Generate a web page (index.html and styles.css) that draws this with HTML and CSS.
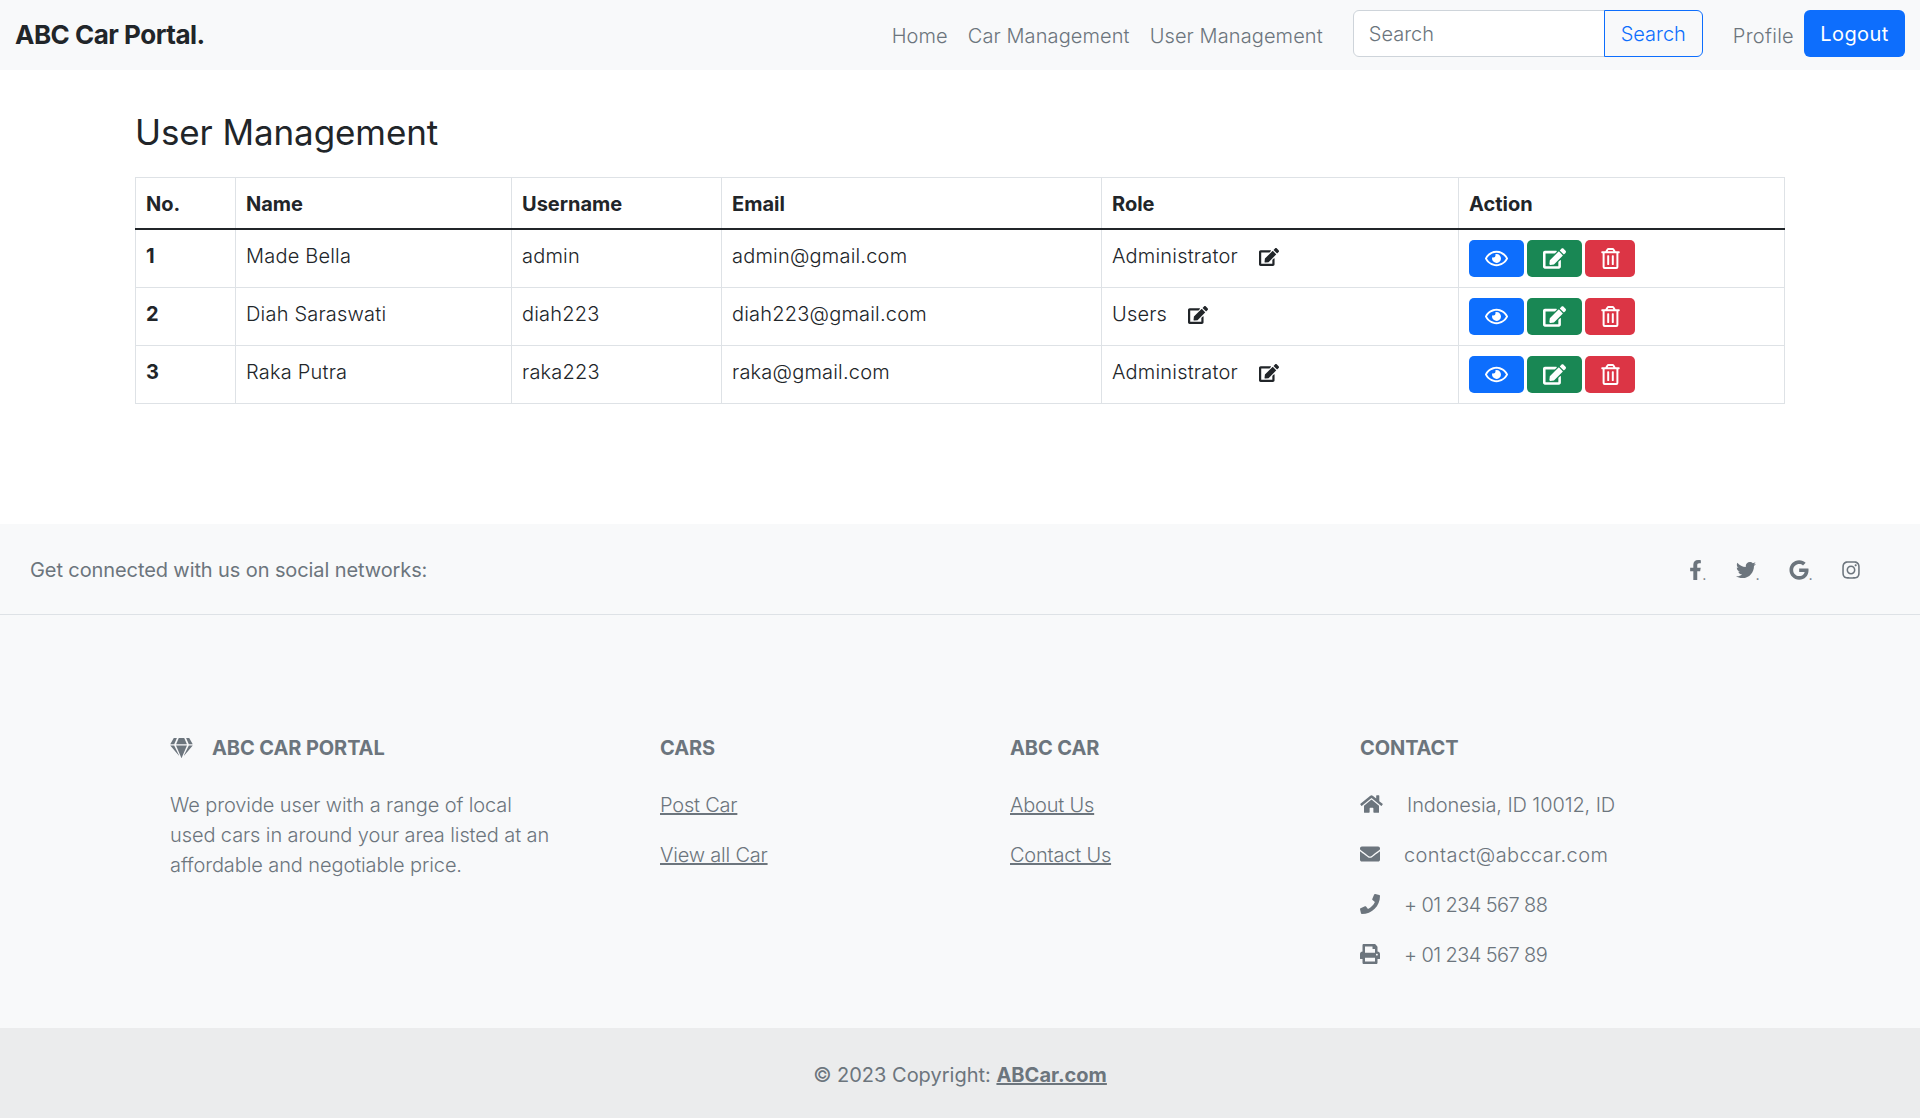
FILE: index.html
```html
<!DOCTYPE html>
<html lang="en">
<head>
<meta charset="UTF-8">
<meta name="viewport" content="width=device-width, initial-scale=1.0">
<title>User Management</title>
<link rel="stylesheet" href="styles.css">
</head>
<body>
<svg class="icon-defs" aria-hidden="true">
  <symbol id="i-eye" viewBox="0 0 576 512"><path d="M288 144a110.94 110.94 0 0 0-31.24 5 55.4 55.4 0 0 1 7.24 27 56 56 0 0 1-56 56 55.4 55.4 0 0 1-27-7.24A111.71 111.71 0 1 0 288 144zm284.52 97.4C518.29 135.59 410.93 64 288 64S57.68 135.64 3.48 241.41a32.35 32.35 0 0 0 0 29.19C57.71 376.41 165.07 448 288 448s230.32-71.64 284.52-177.41a32.35 32.35 0 0 0 0-29.19zM288 400c-98.65 0-189.09-55-237.93-144C98.91 167 189.34 112 288 112s189.09 55 237.93 144C477.1 345 386.66 400 288 400z"/></symbol>
  <symbol id="i-edit" viewBox="0 0 576 512"><path d="M402.6 83.2l90.2 90.2c3.8 3.8 3.8 10 0 13.8L274.4 405.6l-92.8 10.3c-12.4 1.4-22.9-9.1-21.5-21.5l10.3-92.8L388.8 83.2c3.8-3.8 10-3.8 13.8 0zm162-22.9l-48.8-48.8c-15.2-15.2-39.9-15.2-55.2 0l-35.4 35.4c-3.8 3.8-3.8 10 0 13.8l90.2 90.2c3.8 3.8 10 3.8 13.8 0l35.4-35.4c15.2-15.3 15.2-40 0-55.2zM384 346.2V448H64V128h229.8c3.2 0 6.2-1.3 8.5-3.5l40-40c7.6-7.6 2.2-20.5-8.5-20.5H48C21.5 64 0 85.5 0 112v352c0 26.5 21.5 48 48 48h352c26.5 0 48-21.5 48-48V306.2c0-10.7-12.9-16-20.5-8.5l-40 40c-2.2 2.3-3.5 5.3-3.5 8.5z"/></symbol>
  <symbol id="i-trash" viewBox="0 0 448 512"><path d="M268 416h24a12 12 0 0 0 12-12V188a12 12 0 0 0-12-12h-24a12 12 0 0 0-12 12v216a12 12 0 0 0 12 12zM432 80h-82.41l-34-56.7A48 48 0 0 0 274.41 0H173.59a48 48 0 0 0-41.16 23.3L98.41 80H16A16 16 0 0 0 0 96v16a16 16 0 0 0 16 16h16v336a48 48 0 0 0 48 48h288a48 48 0 0 0 48-48V128h16a16 16 0 0 0 16-16V96a16 16 0 0 0-16-16zM171.84 50.91A6 6 0 0 1 177 48h94a6 6 0 0 1 5.15 2.91L293.61 80H154.39zM368 464H80V128h288zm-212-48h24a12 12 0 0 0 12-12V188a12 12 0 0 0-12-12h-24a12 12 0 0 0-12 12v216a12 12 0 0 0 12 12z"/></symbol>
</svg>

<nav class="navbar">
  <a class="brand" href="#">ABC Car Portal.</a>
  <div class="nav-right">
    <ul class="nav-links">
      <li><a href="#">Home</a></li>
      <li><a href="#">Car Management</a></li>
      <li><a href="#">User Management</a></li>
    </ul>
    <form class="search">
      <input type="text" placeholder="Search">
      <button type="button">Search</button>
    </form>
    <a class="nav-profile" href="#">Profile</a>
    <a class="btn-logout" href="#">Logout</a>
  </div>
</nav>

<main class="content">
  <h1>User Management</h1>
  <table class="users">
    <colgroup>
      <col class="c-no"><col class="c-name"><col class="c-user"><col class="c-email"><col class="c-role"><col class="c-action">
    </colgroup>
    <thead>
      <tr><th>No.</th><th>Name</th><th>Username</th><th>Email</th><th>Role</th><th>Action</th></tr>
    </thead>
    <tbody>
      <tr>
        <th>1</th><td>Made Bella</td><td>admin</td><td>admin@gmail.com</td>
        <td>Administrator <svg class="role-edit"><use href="#i-edit"/></svg></td>
        <td><div class="actions">
          <a class="act act-view" href="#"><svg><use href="#i-eye"/></svg></a>
          <a class="act act-edit" href="#"><svg><use href="#i-edit"/></svg></a>
          <a class="act act-del" href="#"><svg><use href="#i-trash"/></svg></a>
        </div></td>
      </tr>
      <tr>
        <th>2</th><td>Diah Saraswati</td><td>diah223</td><td>diah223@gmail.com</td>
        <td>Users <svg class="role-edit"><use href="#i-edit"/></svg></td>
        <td><div class="actions">
          <a class="act act-view" href="#"><svg><use href="#i-eye"/></svg></a>
          <a class="act act-edit" href="#"><svg><use href="#i-edit"/></svg></a>
          <a class="act act-del" href="#"><svg><use href="#i-trash"/></svg></a>
        </div></td>
      </tr>
      <tr>
        <th>3</th><td>Raka Putra</td><td>raka223</td><td>raka@gmail.com</td>
        <td>Administrator <svg class="role-edit"><use href="#i-edit"/></svg></td>
        <td><div class="actions">
          <a class="act act-view" href="#"><svg><use href="#i-eye"/></svg></a>
          <a class="act act-edit" href="#"><svg><use href="#i-edit"/></svg></a>
          <a class="act act-del" href="#"><svg><use href="#i-trash"/></svg></a>
        </div></td>
      </tr>
    </tbody>
  </table>
</main>

<footer class="footer">
  <section class="social">
    <span class="social-text">Get connected with us on social networks:</span>
    <div class="social-links">
      <a href="#"><svg viewBox="0 0 320 512"><path d="M279.14 288l14.22-92.66h-88.91v-60.13c0-25.35 12.42-50.06 52.24-50.06h40.42V6.26S260.43 0 225.36 0c-73.22 0-121.08 44.38-121.08 124.72v70.62H22.89V288h81.39v224h100.17V288z"/></svg><i>.</i></a>
      <a href="#"><svg viewBox="0 0 512 512"><path d="M459.37 151.716c.325 4.548.325 9.097.325 13.645 0 138.72-105.583 298.558-298.558 298.558-59.452 0-114.68-17.219-161.137-47.106 8.447.974 16.568 1.299 25.34 1.299 49.055 0 94.213-16.568 130.274-44.832-46.132-.975-84.792-31.188-98.112-72.772 6.498.974 12.995 1.624 19.818 1.624 9.421 0 18.843-1.3 27.614-3.573-48.081-9.747-84.143-51.98-84.143-102.985v-1.299c13.969 7.797 30.214 12.67 47.431 13.319-28.264-18.843-46.781-51.005-46.781-87.391 0-19.492 5.197-37.36 14.294-52.954 51.655 63.675 129.3 105.258 216.365 109.807-1.624-7.797-2.599-15.918-2.599-24.04 0-57.828 46.782-104.934 104.934-104.934 30.213 0 57.502 12.67 76.67 33.137 23.715-4.548 46.456-13.32 66.599-25.34-7.798 24.366-24.366 44.833-46.132 57.827 21.117-2.273 41.584-8.122 60.426-16.243-14.292 20.791-32.161 39.308-52.628 54.253z"/></svg><i>.</i></a>
      <a href="#"><svg viewBox="0 0 488 512"><path d="M488 261.8C488 403.3 391.1 504 248 504 110.8 504 0 393.2 0 256S110.8 8 248 8c66.8 0 123 24.5 166.3 64.9l-67.5 64.9C258.5 52.6 94.3 116.6 94.3 256c0 86.5 69.1 156.6 153.7 156.6 98.2 0 135-70.4 140.8-106.9H248v-85.3h236.1c2.3 12.7 3.9 24.9 3.9 41.4z"/></svg><i>.</i></a>
      <a href="#"><svg viewBox="0 0 448 512"><path d="M224.1 141c-63.6 0-114.9 51.3-114.9 114.9s51.3 114.9 114.9 114.9S339 319.5 339 255.9 287.7 141 224.1 141zm0 189.6c-41.1 0-74.7-33.5-74.7-74.7s33.5-74.7 74.7-74.7 74.7 33.5 74.7 74.7-33.6 74.7-74.7 74.7zm146.4-194.3c0 14.9-12 26.8-26.8 26.8-14.9 0-26.8-12-26.8-26.8s12-26.8 26.8-26.8 26.8 12 26.8 26.8zm76.1 27.2c-1.7-35.9-9.9-67.7-36.2-93.9-26.2-26.2-58-34.4-93.9-36.2-37-2.1-147.9-2.1-184.9 0-35.8 1.7-67.6 9.9-93.9 36.1s-34.4 58-36.2 93.9c-2.1 37-2.1 147.9 0 184.9 1.7 35.9 9.9 67.7 36.2 93.9s58 34.4 93.9 36.2c37 2.1 147.9 2.1 184.9 0 35.9-1.7 67.7-9.9 93.9-36.2 26.2-26.2 34.4-58 36.2-93.9 2.1-37 2.1-147.8 0-184.8zM398.8 388c-7.8 19.6-22.9 34.7-42.6 42.6-29.5 11.7-99.5 9-132.1 9s-102.7 2.6-132.1-9c-19.6-7.8-34.7-22.9-42.6-42.6-11.7-29.5-9-99.5-9-132.1s-2.6-102.7 9-132.1c7.8-19.6 22.9-34.7 42.6-42.6 29.5-11.7 99.5-9 132.1-9s102.7-2.6 132.1 9c19.6 7.8 34.7 22.9 42.6 42.6 11.7 29.5 9 99.5 9 132.1s2.7 102.7-9 132.1z"/></svg></a>
    </div>
  </section>

  <section class="footer-main">
    <div class="col col-about">
      <h6><svg class="gem" viewBox="0 0 576 512"><path d="M485.5 0L576 160H474.9L405.7 0h79.8zm-128 0l69.2 160H149.3L218.5 0h139zm-267 0h79.8l-69.2 160H0L90.5 0zM0 192h100.7l123 251.7c1.5 3.1-2.7 5.9-5 3.3L0 192zm148.2 0h279.6l-137 318.2c-1 2.4-4.5 2.4-5.5 0L148.2 192zm204.1 251.7l123-251.7H576L357.3 446.9c-2.3 2.7-6.5-.1-5-3.2z"/></svg>ABC CAR PORTAL</h6>
      <p>We provide user with a range of local used cars in around your area listed at an affordable and negotiable price.</p>
    </div>
    <div class="col col-cars">
      <h6>CARS</h6>
      <p><a href="#">Post Car</a></p>
      <p><a href="#">View all Car</a></p>
    </div>
    <div class="col col-abc">
      <h6>ABC CAR</h6>
      <p><a href="#">About Us</a></p>
      <p><a href="#">Contact Us</a></p>
    </div>
    <div class="col col-contact">
      <h6>CONTACT</h6>
      <p class="addr"><svg viewBox="0 0 576 512"><path d="M280.37 148.26L96 300.11V464a16 16 0 0 0 16 16l112.06-.29a16 16 0 0 0 15.92-16V368a16 16 0 0 1 16-16h64a16 16 0 0 1 16 16v95.64a16 16 0 0 0 16 16.05L464 480a16 16 0 0 0 16-16V300L295.67 148.26a12.19 12.19 0 0 0-15.3 0zM571.6 251.47L488 182.56V44.05a12 12 0 0 0-12-12h-56a12 12 0 0 0-12 12v72.61L318.47 43a48 48 0 0 0-61 0L4.34 251.47a12 12 0 0 0-1.6 16.9l25.5 31A12 12 0 0 0 45.15 301l235.22-193.74a12.19 12.19 0 0 1 15.3 0L530.9 301a12 12 0 0 0 16.9-1.6l25.5-31a12 12 0 0 0-1.7-16.93z"/></svg>Indonesia, ID 10012, ID</p>
      <p class="mail"><svg viewBox="0 0 512 512"><path d="M502.3 190.8c3.9-3.1 9.7-.2 9.7 4.7V400c0 26.5-21.5 48-48 48H48c-26.5 0-48-21.5-48-48V195.6c0-5 5.7-7.8 9.7-4.7 22.4 17.4 52.1 39.5 154.1 113.6 21.1 15.4 56.7 47.8 92.2 47.6 35.7.3 72-32.8 92.3-47.6 102-74.1 131.6-96.3 154-113.7zM256 320c23.2.4 56.6-29.2 73.4-41.4 132.7-96.3 142.8-104.7 173.4-128.7 5.8-4.5 9.2-11.5 9.2-18.9v-19c0-26.5-21.5-48-48-48H48C21.5 64 0 85.5 0 112v19c0 7.4 3.4 14.3 9.2 18.9 30.6 23.9 40.7 32.4 173.4 128.7 16.8 12.2 50.2 41.8 73.4 41.4z"/></svg>contact@abccar.com</p>
      <p class="tel"><svg viewBox="0 0 512 512"><path d="M493.4 24.6l-104-24c-11.3-2.6-22.9 3.3-27.5 13.9l-48 112c-4.2 9.8-1.4 21.3 6.9 28l60.6 49.6c-36 76.7-98.9 140.5-177.2 177.2l-49.6-60.6c-6.8-8.3-18.2-11.1-28-6.9l-112 48C3.9 366.5-2 378.1.6 389.4l24 104C27.1 504.2 36.7 512 48 512c256.1 0 464-207.5 464-464 0-11.2-7.7-20.9-18.6-23.4z"/></svg>+ 01 234 567 88</p>
      <p class="tel"><svg viewBox="0 0 512 512"><path d="M448 192V77.25c0-8.49-3.37-16.62-9.37-22.63L393.37 9.37c-6-6-14.14-9.37-22.63-9.37H96C78.33 0 64 14.33 64 32v160c-35.35 0-64 28.65-64 64v112c0 8.84 7.16 16 16 16h48v96c0 17.67 14.33 32 32 32h320c17.67 0 32-14.33 32-32v-96h48c8.84 0 16-7.16 16-16V256c0-35.35-28.65-64-64-64zm-64 256H128v-96h256v96zm0-224H128V64h192v48c0 8.84 7.16 16 16 16h48v96zm48 72c-13.25 0-24-10.75-24-24 0-13.26 10.75-24 24-24s24 10.74 24 24c0 13.25-10.75 24-24 24z"/></svg>+ 01 234 567 89</p>
    </div>
  </section>

  <div class="copyright">© 2023 Copyright: <a href="#">ABCar.com</a></div>
</footer>
</body>
</html>
```

FILE: styles.css
```css
* {
  box-sizing: border-box;
}
body {
  margin: 0;
  font-family: Inter, "Liberation Sans", sans-serif;
  font-size: 20px;
  line-height: 30px;
  color: #212529;
  background: #fff;
}
a {
  color: inherit;
}
.icon-defs {
  display: none;
}

/* navbar */
.navbar {
  display: flex;
  justify-content: space-between;
  align-items: center;
  height: 70px;
  padding: 0 15px;
  background-color: #f8f9fa;
}
.brand {
  font-size: 26px;
  font-weight: 700;
  letter-spacing: -0.5px;
  text-decoration: none;
  color: #212529;
}
.nav-right {
  display: flex;
  align-items: center;
  font-weight: 300;
}
.nav-links {
  display: flex;
  gap: 20px;
  list-style: none;
  margin: 2px 30px 0 0;
  padding: 0;
  letter-spacing: 0.1px;
}
.nav-links a,
.nav-profile {
  color: #6c757d;
  text-decoration: none;
}
.search {
  display: flex;
  margin: 0 30px 4px 0;
}
.search input {
  width: 252px;
  height: 47px;
  padding: 2px 15px 0;
  border: 1px solid #ced4da;
  border-radius: 6px 0 0 6px;
  font: inherit;
  background: #fff;
  outline: none;
}
.search input::placeholder {
  color: #6c757d;
}
.search button {
  width: 99px;
  height: 47px;
  margin-left: -1px;
  padding: 2px 0 0;
  border: 1px solid #0d6efd;
  border-radius: 0 6px 6px 0;
  font: inherit;
  color: #0d6efd;
  background: transparent;
}
.nav-profile {
  margin: 2px 10px 0 0;
  letter-spacing: 0.3px;
}
.btn-logout {
  display: flex;
  align-items: center;
  justify-content: center;
  width: 101px;
  height: 47px;
  margin-bottom: 4px;
  padding-top: 2px;
  border-radius: 6px;
  font-weight: 400;
  letter-spacing: 0.4px;
  color: #fff;
  background-color: #0d6efd;
  text-decoration: none;
}

/* user table */
.content {
  height: 454px;
  padding: 38px 135px 0;
}
.content h1 {
  margin: 0 0 21px;
  font-size: 35px;
  line-height: 48px;
  font-weight: 400;
  letter-spacing: -0.1px;
}
.users {
  width: 100%;
  table-layout: fixed;
  border-collapse: collapse;
}
.c-no { width: 100px; }
.c-name { width: 276px; }
.c-user { width: 210px; }
.c-email { width: 380px; }
.c-role { width: 357px; }
.users th,
.users td {
  padding: 11px 10px 10px;
  border: 1px solid #dee2e6;
  text-align: left;
  vertical-align: top;
}
.users td {
  font-weight: 300;
  letter-spacing: 0.2px;
}
.users thead th {
  height: 51px;
  padding: 11px 10px 9px;
  border-bottom: 2px solid #212529;
}
.users tbody tr {
  height: 58px;
}
.role-edit {
  width: 20px;
  height: 18px;
  margin-left: 15px;
  fill: #212529;
  vertical-align: -3px;
}
.actions {
  display: flex;
  gap: 3px;
  margin-top: -1px;
}
.act {
  display: flex;
  align-items: center;
  justify-content: center;
  width: 55px;
  height: 37px;
  border-radius: 5px;
  color: #fff;
}
.act svg {
  width: 23px;
  height: 21px;
  fill: #fff;
}
.act-view { background-color: #0d6efd; }
.act-edit { background-color: #198754; }
.act-del { width: 50px; background-color: #dc3545; }

/* footer */
.footer {
  color: #6c757d;
  background-color: #f8f9fa;
}
.social {
  display: flex;
  justify-content: space-between;
  align-items: center;
  height: 91px;
  padding: 1px 60px 0 30px;
  border-bottom: 1px solid #dee2e6;
}
.social-text {
  letter-spacing: -0.1px;
}
.social-links {
  display: flex;
  align-items: center;
  gap: 29.5px;
}
.social-links a {
  display: flex;
  align-items: flex-end;
  text-decoration: none;
}
.social-links svg {
  height: 20px;
  fill: #6c757d;
}
.social-links a:nth-child(1) svg { width: 13px; }
.social-links a:nth-child(2) svg { width: 20px; }
.social-links a:nth-child(3) svg { width: 20px; }
.social-links a:nth-child(4) svg { width: 18px; }
.social-links i {
  font-size: 11px;
  line-height: 8px;
  font-weight: 700;
  font-style: normal;
}
.footer-main {
  display: flex;
  height: 413px;
  padding: 118px 0 0 170px;
}
.col h6 {
  display: flex;
  align-items: center;
  margin: 0 0 27px;
  font-size: 20px;
  line-height: 30px;
  font-weight: 700;
  letter-spacing: -0.1px;
}
.col p {
  margin: 0 0 20px;
  font-weight: 300;
}
.col-about { width: 490px; }
.col-about p {
  width: 385px;
  letter-spacing: -0.1px;
}
.col-cars,
.col-abc { width: 350px; }
.col-cars a,
.col-abc a {
  letter-spacing: -0.2px;
}
.gem {
  width: 23px;
  height: 20px;
  margin-right: 19px;
  fill: #6c757d;
}
.col-contact p {
  display: flex;
  align-items: center;
}
.col-contact svg {
  width: 20px;
  height: 20px;
  margin: -2px 24px 0 0;
  flex: none;
  fill: #6c757d;
}
.col-contact .addr svg {
  width: 23px;
}
.addr {
  letter-spacing: -0.1px;
}
.mail {
  letter-spacing: 0.4px;
}
.tel {
  letter-spacing: -0.6px;
}
.copyright {
  height: 90px;
  padding-top: 32px;
  text-align: center;
  background-color: rgba(0, 0, 0, 0.05);
}
.copyright a {
  font-weight: 700;
  color: #6c757d;
}
```
